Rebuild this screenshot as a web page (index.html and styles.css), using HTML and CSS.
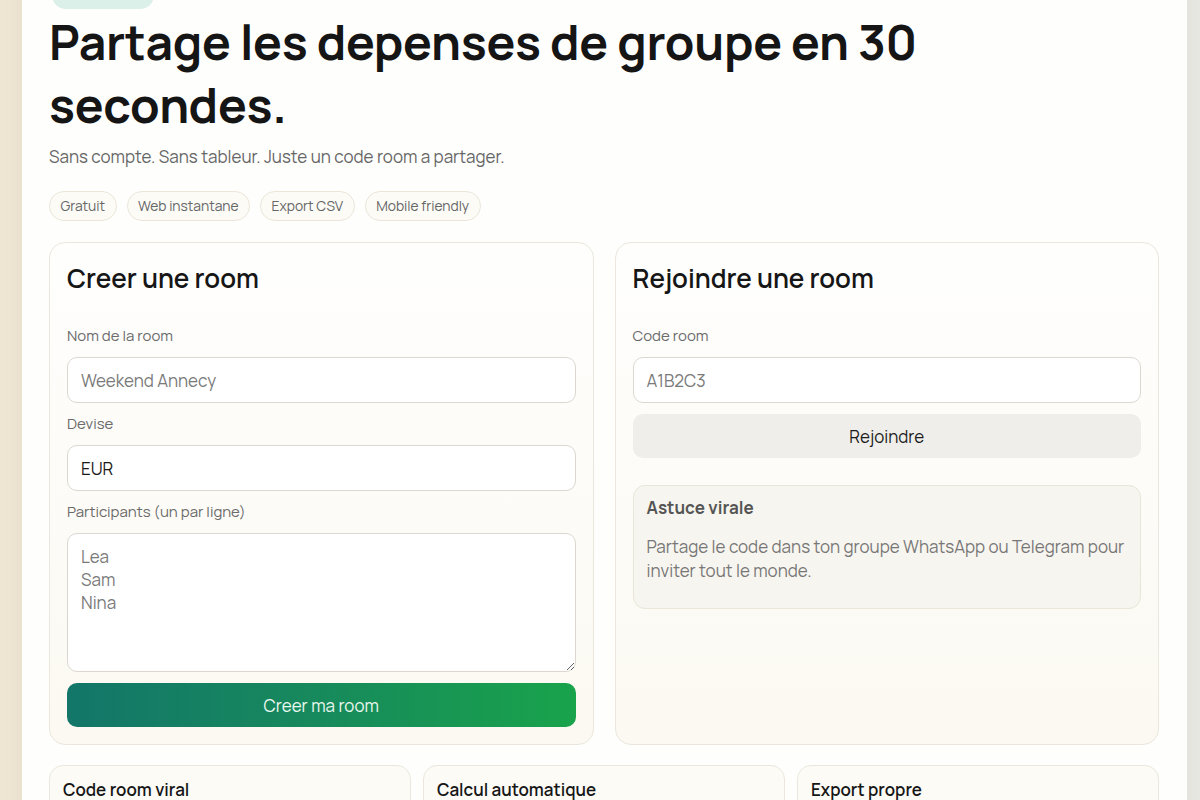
FILE: index.html
```html
<!DOCTYPE html>
<html lang="fr">
<head>
<meta charset="utf-8">
<title>Partage les depenses</title>
<link rel="stylesheet" href="styles.css">
</head>
<body>
<main class="shell">
  <div class="badge">Split express</div>
  <h1 class="title">Partage les depenses de groupe en 30 secondes.</h1>
  <p class="subtitle">Sans compte. Sans tableur. Juste un code room a partager.</p>
  <div class="chips">
    <span class="chip">Gratuit</span>
    <span class="chip">Web instantane</span>
    <span class="chip">Export CSV</span>
    <span class="chip">Mobile friendly</span>
  </div>
  <div class="cards">
    <section class="card">
      <h2 class="card-title">Creer une room</h2>
      <label class="label">Nom de la room</label>
      <input class="field" type="text" placeholder="Weekend Annecy">
      <label class="label">Devise</label>
      <input class="field" type="text" value="EUR">
      <label class="label">Participants (un par ligne)</label>
      <textarea class="field area" placeholder="Lea&#10;Sam&#10;Nina"></textarea>
      <button class="btn primary">Creer ma room</button>
    </section>
    <section class="card">
      <h2 class="card-title">Rejoindre une room</h2>
      <label class="label">Code room</label>
      <input class="field" type="text" placeholder="A1B2C3">
      <button class="btn secondary">Rejoindre</button>
      <div class="tip">
        <h3 class="tip-title">Astuce virale</h3>
        <p class="tip-text">Partage le code dans ton groupe WhatsApp ou Telegram pour inviter tout le monde.</p>
      </div>
    </section>
  </div>
  <div class="features">
    <div class="feature"><h3 class="feature-title">Code room viral</h3></div>
    <div class="feature"><h3 class="feature-title">Calcul automatique</h3></div>
    <div class="feature"><h3 class="feature-title">Export propre</h3></div>
  </div>
</main>
</body>
</html>
```
FILE: styles.css
```css
* { box-sizing: border-box; }
html, body { margin: 0; padding: 0; }
body {
  font-family: "Manrope", "Inter", "Noto Sans", sans-serif;
  color: #161616;
  background: linear-gradient(90deg, #efe6d4 0%, #f1ede4 50%, #e9e9e4 100%);
  min-height: 800px;
  overflow: hidden;
}
.shell {
  margin: -47px 0 0 22px;
  width: 1165px;
  background: #fefefd;
  padding: 27px 28px 40px 27px;
  box-shadow: 0 0 24px rgba(120, 100, 60, 0.08);
}
.badge {
  display: block;
  margin: 0 0 1px 3px;
  height: 29px;
  width: 102px;
  padding: 0 0 15px;
  line-height: 14px;
  text-align: center;
  border-radius: 14px;
  background: #dcf0ea;
  color: #137667;
  font-size: 12px;
  font-weight: 600;
  white-space: nowrap;
}
.title {
  margin: 0;
  max-width: 930px;
  font-size: 48px;
  line-height: 63px;
  font-weight: 700;
  letter-spacing: -0.3px;
  color: #151515;
}
.subtitle {
  margin: 8px 0 0;
  font-size: 17px;
  line-height: 26px;
  color: #666;
}
.chips {
  display: flex;
  gap: 10px;
  margin-top: 21px;
}
.chip {
  height: 30px;
  line-height: 28px;
  padding: 0 10.5px;
  border: 1px solid #ebe6d8;
  border-radius: 15px;
  background: #fcfbf6;
  font-size: 13.8px;
  color: #666;
}
.cards {
  display: grid;
  grid-template-columns: 1fr 1fr;
  gap: 21px;
  margin-top: 21px;
}
.card {
  display: flex;
  flex-direction: column;
  border: 1px solid #ebe7dc;
  border-radius: 16px;
  background: linear-gradient(180deg, #fefefd 0%, #fcf9f2 100%);
  padding: 17px;
  min-height: 502px;
}
.card-title {
  margin: 0 0 31px;
  font-size: 26px;
  line-height: 36px;
  font-weight: 600;
  color: #161616;
}
.label {
  font-size: 15px;
  line-height: 18px;
  color: #6b6b6b;
  margin-bottom: 12px;
}
.field {
  display: block;
  width: 100%;
  height: 46px;
  border: 1px solid #dcd8cf;
  border-radius: 10px;
  background: #fff;
  padding: 0 13px;
  font-family: inherit;
  font-size: 17px;
  color: #1a1a1a;
  margin-bottom: 12px;
  outline: none;
}
.field::placeholder { color: #7a7a7a; }
.area {
  height: 139px;
  padding: 11px 13px;
  line-height: 23px;
  resize: vertical;
  margin-bottom: 11px;
}
.btn {
  display: block;
  width: 100%;
  height: 44px;
  border: 0;
  border-radius: 10px;
  font-family: inherit;
  font-size: 17px;
}
.primary {
  background: linear-gradient(90deg, #137669 0%, #178a5c 50%, #19a34b 100%);
  color: #e9f8ef;
}
.secondary {
  margin-top: -1px;
  background: #efeeea;
  color: #1c1c1c;
}
.tip {
  margin-top: 27px;
  border: 1px solid #e9e5d8;
  border-radius: 12px;
  background: #f7f5ef;
  padding: 11px 13px 25px;
}
.tip-title {
  margin: 0;
  font-size: 17px;
  line-height: 22px;
  font-weight: 700;
  color: #555;
}
.tip-text {
  margin: 16px 0 0;
  font-size: 17px;
  line-height: 24px;
  color: #777;
}
.features {
  display: grid;
  grid-template-columns: 1fr 1fr 1fr;
  gap: 12px;
  margin-top: 20px;
}
.feature {
  border: 1px solid #ebe7dc;
  border-radius: 14px;
  background: #fcfbf6;
  padding: 12px 13px 40px;
}
.feature-title {
  margin: 0;
  font-size: 17px;
  line-height: 24px;
  font-weight: 600;
  color: #161616;
}
```
